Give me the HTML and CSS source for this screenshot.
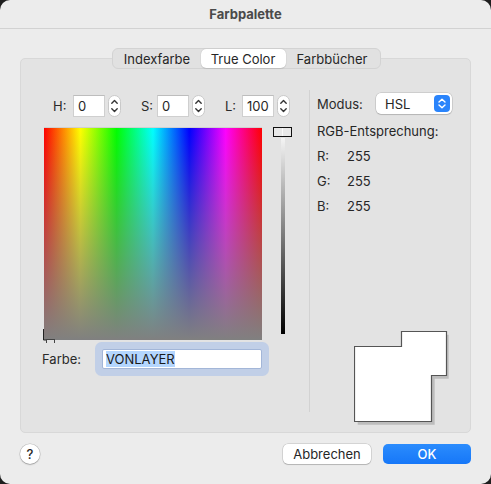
FILE: index.html
```html
<!DOCTYPE html>
<html lang="de">
<head>
<meta charset="utf-8">
<title>Farbpalette</title>
<link rel="stylesheet" href="styles.css">
</head>
<body>
<div class="window">
  <div class="titlebar">Farbpalette</div>
  <div class="tabs-wrap">
    <div class="tabs">
      <div class="tab">Indexfarbe</div>
      <div class="tab active">True Color</div>
      <div class="tab">Farbbücher</div>
    </div>
  </div>
  <div class="panel">
    <div class="left">
      <div class="hsl-row">
        <span class="lbl lbl-h">H:</span>
        <div class="field">0</div>
        <svg class="stepper" width="13" height="22" viewBox="0 0 13 22"><rect x="0.5" y="0.5" width="12" height="21" rx="6" fill="#fff" stroke="#c9c9c9"/><path d="M3.8 8.2 L6.5 5.6 L9.2 8.2" fill="none" stroke="#333" stroke-width="1.4" stroke-linecap="round" stroke-linejoin="round"/><path d="M3.8 13.8 L6.5 16.4 L9.2 13.8" fill="none" stroke="#333" stroke-width="1.4" stroke-linecap="round" stroke-linejoin="round"/></svg>
        <span class="lbl lbl-s">S:</span>
        <div class="field">0</div>
        <svg class="stepper" width="13" height="22" viewBox="0 0 13 22"><rect x="0.5" y="0.5" width="12" height="21" rx="6" fill="#fff" stroke="#c9c9c9"/><path d="M3.8 8.2 L6.5 5.6 L9.2 8.2" fill="none" stroke="#333" stroke-width="1.4" stroke-linecap="round" stroke-linejoin="round"/><path d="M3.8 13.8 L6.5 16.4 L9.2 13.8" fill="none" stroke="#333" stroke-width="1.4" stroke-linecap="round" stroke-linejoin="round"/></svg>
        <span class="lbl lbl-l">L:</span>
        <div class="field">100</div>
        <svg class="stepper" width="13" height="22" viewBox="0 0 13 22"><rect x="0.5" y="0.5" width="12" height="21" rx="6" fill="#fff" stroke="#c9c9c9"/><path d="M3.8 8.2 L6.5 5.6 L9.2 8.2" fill="none" stroke="#333" stroke-width="1.4" stroke-linecap="round" stroke-linejoin="round"/><path d="M3.8 13.8 L6.5 16.4 L9.2 13.8" fill="none" stroke="#333" stroke-width="1.4" stroke-linecap="round" stroke-linejoin="round"/></svg>
      </div>
      <div class="picker-row">
        <div class="spectrum">
          <svg class="cursor" width="14" height="14" viewBox="0 0 14 14"><path d="M0.5 0 V11 M0.5 11 H3" stroke="#222" stroke-width="1" fill="none"/><rect x="3.5" y="10.5" width="8" height="4" fill="none" stroke="#444" stroke-width="1"/></svg>
        </div>
        <div class="lum">
          <div class="thumb"><span></span></div>
          <div class="track"></div>
        </div>
      </div>
      <div class="farbe-row">
        <span class="lbl lbl-farbe">Farbe:</span>
        <div class="farbe-field"><span class="sel">VONLAYER</span></div>
      </div>
    </div>
    <div class="divider"></div>
    <div class="right">
      <div class="modus-row">
        <span class="lbl lbl-modus">Modus:</span>
        <div class="select">
          <span>HSL</span>
          <svg class="sel-btn" width="16" height="17" viewBox="0 0 16 17"><rect width="16" height="17" rx="4" fill="#2a84fb"/><path d="M5 7 L8 4.2 L11 7" fill="none" stroke="#fff" stroke-width="1.4" stroke-linecap="round" stroke-linejoin="round"/><path d="M5 10 L8 12.8 L11 10" fill="none" stroke="#fff" stroke-width="1.4" stroke-linecap="round" stroke-linejoin="round"/></svg>
        </div>
      </div>
      <div class="rgb-title">RGB-Entsprechung:</div>
      <div class="rgb-row first"><span class="lbl lbl-rgb">R:</span><span>255</span></div>
      <div class="rgb-row"><span class="lbl lbl-rgb">G:</span><span>255</span></div>
      <div class="rgb-row"><span class="lbl lbl-rgb">B:</span><span>255</span></div>
      <svg class="preview" width="96" height="94" viewBox="0 0 96 94">
        <path d="M2.5 17.5 H48.5 V2.5 H93.5 V46.5 H79.5 V92.5 H2.5 Z" fill="#bdbdbd" transform="translate(1.2,1.2)"/>
        <path d="M0.5 15.5 H47.5 V0.5 H92.5 V44.5 H77.5 V90.5 H0.5 Z" fill="#fff" stroke="#555" stroke-width="1.2"/>
      </svg>
    </div>
  </div>
  <div class="bottom">
    <div class="help">?</div>
    <div class="spacer"></div>
    <div class="btn cancel">Abbrechen</div>
    <div class="btn ok">OK</div>
  </div>
</div>
</body>
</html>
```
FILE: styles.css
```css
* { box-sizing: border-box; }
html, body { margin: 0; padding: 0; }
body {
  background: #1e1e1e;
  font-family: Inter, "Noto Sans", "Liberation Sans", sans-serif;
  font-size: 13px;
  color: #262626;
}
.window {
  width: 491px;
  height: 484px;
  background: #ececec;
  border-radius: 10px;
  overflow: hidden;
  display: flex;
  flex-direction: column;
}
.titlebar {
  height: 29px;
  border-bottom: 1px solid #d2d2d2;
  display: flex;
  align-items: center;
  justify-content: center;
  font-weight: 700;
  color: #4a4a4a;
  padding-bottom: 1px;
}
.tabs-wrap {
  margin-top: 19px;
  margin-bottom: -11px;
  display: flex;
  justify-content: center;
  position: relative;
  z-index: 1;
  padding-left: 1px;
}
.tabs {
  display: flex;
  height: 21px;
  background: #e1e1e1;
  border: 1px solid #d3d3d3;
  border-radius: 6px;
  padding: 0 1px;
  align-items: center;
}
.tab {
  height: 19px;
  display: flex;
  align-items: center;
  justify-content: center;
  white-space: nowrap;
  padding: 0;
}
.tab:first-child { width: 87px; }
.tab.active {
  width: 85px;
  background: #fff;
  border-radius: 5px;
  box-shadow: 0 0 1px rgba(0,0,0,0.25), 0 1px 1px rgba(0,0,0,0.08);
}
.tab:last-child { width: 93px; }
.panel {
  margin: 0 20px;
  height: 375px;
  background: #e3e3e3;
  border: 1px solid #d8d8d8;
  border-radius: 5px;
  display: flex;
}
.left {
  width: 288px;
  padding-left: 23px;
  padding-top: 36px;
}
.hsl-row {
  display: flex;
  align-items: center;
  height: 22px;
  margin-left: 9px;
}
.lbl { color: #2a2a2a; }
.lbl-h { width: 20px; }
.lbl-s { width: 16px; margin-left: 20px; }
.lbl-l { width: 17px; margin-left: 20px; }
.field {
  width: 32px;
  height: 22px;
  background: #fff;
  border: 1px solid #cfcfcf;
  border-top-color: #bdbdbd;
  padding-left: 4px;
  display: flex;
  align-items: center;
}
.stepper { margin-left: 3px; display: block; }
.picker-row {
  display: flex;
  margin-top: 10px;
  height: 213px;
}
.spectrum {
  width: 218px;
  height: 213px;
  position: relative;
  background:
    linear-gradient(to bottom, rgba(128,128,128,0), #808080),
    linear-gradient(to right, #f00 0%, #ff0 16.67%, #0f0 33.33%, #0ff 50%, #00f 66.67%, #f0f 83.33%, #f00 100%);
  border-top: 1px solid #d0d0d0;
}
.cursor {
  position: absolute;
  left: -1px;
  bottom: -3px;
}
.lum {
  margin-left: 11px;
  width: 19px;
  display: flex;
  flex-direction: column;
  align-items: center;
}
.thumb {
  width: 19px;
  height: 10px;
  border: 1px solid #111;
  background: #e8e8e8;
  display: flex;
  justify-content: center;
}
.thumb span {
  width: 1px;
  background: #fafafa;
}
.track {
  margin-top: 1px;
  width: 4px;
  height: 196px;
  background: linear-gradient(to bottom, #f4f4f4, #000);
  margin-left: 1px;
}
.farbe-row {
  display: flex;
  align-items: center;
  margin-top: 9px;
  margin-left: -2px;
}
.lbl-farbe { width: 60px; }
.farbe-field {
  width: 160px;
  height: 20px;
  background: #fff;
  border: 1px solid #a3b6d8;
  box-shadow: 0 0 0 7px #c1cfe7;
  border-radius: 2px;
  padding-left: 3px;
  display: flex;
  align-items: center;
  font-size: 13px;
}
.sel {
  background: #b4d6fe;
  line-height: 16px;
  color: #1a1a1a;
}
.divider {
  width: 1px;
  background: #d2d2d2;
  margin-top: 31px;
  height: 322px;
}
.right {
  padding-left: 7px;
  padding-top: 34px;
}
.modus-row {
  display: flex;
  align-items: center;
  height: 21px;
}
.lbl-modus { width: 59px; }
.select {
  width: 76px;
  height: 21px;
  background: #fff;
  border-radius: 5px;
  box-shadow: 0 0 0 0.5px rgba(0,0,0,0.18), 0 1px 1px rgba(0,0,0,0.12);
  display: flex;
  align-items: center;
  justify-content: space-between;
  padding-left: 9px;
  padding-right: 2px;
}
.sel-btn { display: block; }
.rgb-title {
  margin-top: 9px;
  line-height: 16px;
}
.rgb-row {
  display: flex;
  line-height: 16px;
  margin-top: 9px;
}
.lbl-rgb { width: 30px; }
.preview {
  display: block;
  margin-top: 117px;
  margin-left: 37px;
}
.bottom {
  display: flex;
  align-items: center;
  padding: 0 20px;
  margin-top: 11px;
}
.help {
  width: 20px;
  height: 20px;
  border-radius: 50%;
  background: #fff;
  box-shadow: 0 0 0 0.5px rgba(0,0,0,0.2), 0 1px 1.5px rgba(0,0,0,0.2);
  display: flex;
  align-items: center;
  justify-content: center;
  font-size: 13px;
  font-weight: 500;
}
.spacer { flex: 1; }
.btn {
  width: 88px;
  height: 20px;
  border-radius: 5px;
  display: flex;
  align-items: center;
  justify-content: center;
}
.cancel {
  background: #fff;
  box-shadow: 0 0 0 0.5px rgba(0,0,0,0.2), 0 1px 1px rgba(0,0,0,0.15);
}
.ok {
  margin-left: 12px;
  background: linear-gradient(to bottom, #2b8cfd, #1677f8);
  color: #fff;
  font-weight: 500;
}
```
